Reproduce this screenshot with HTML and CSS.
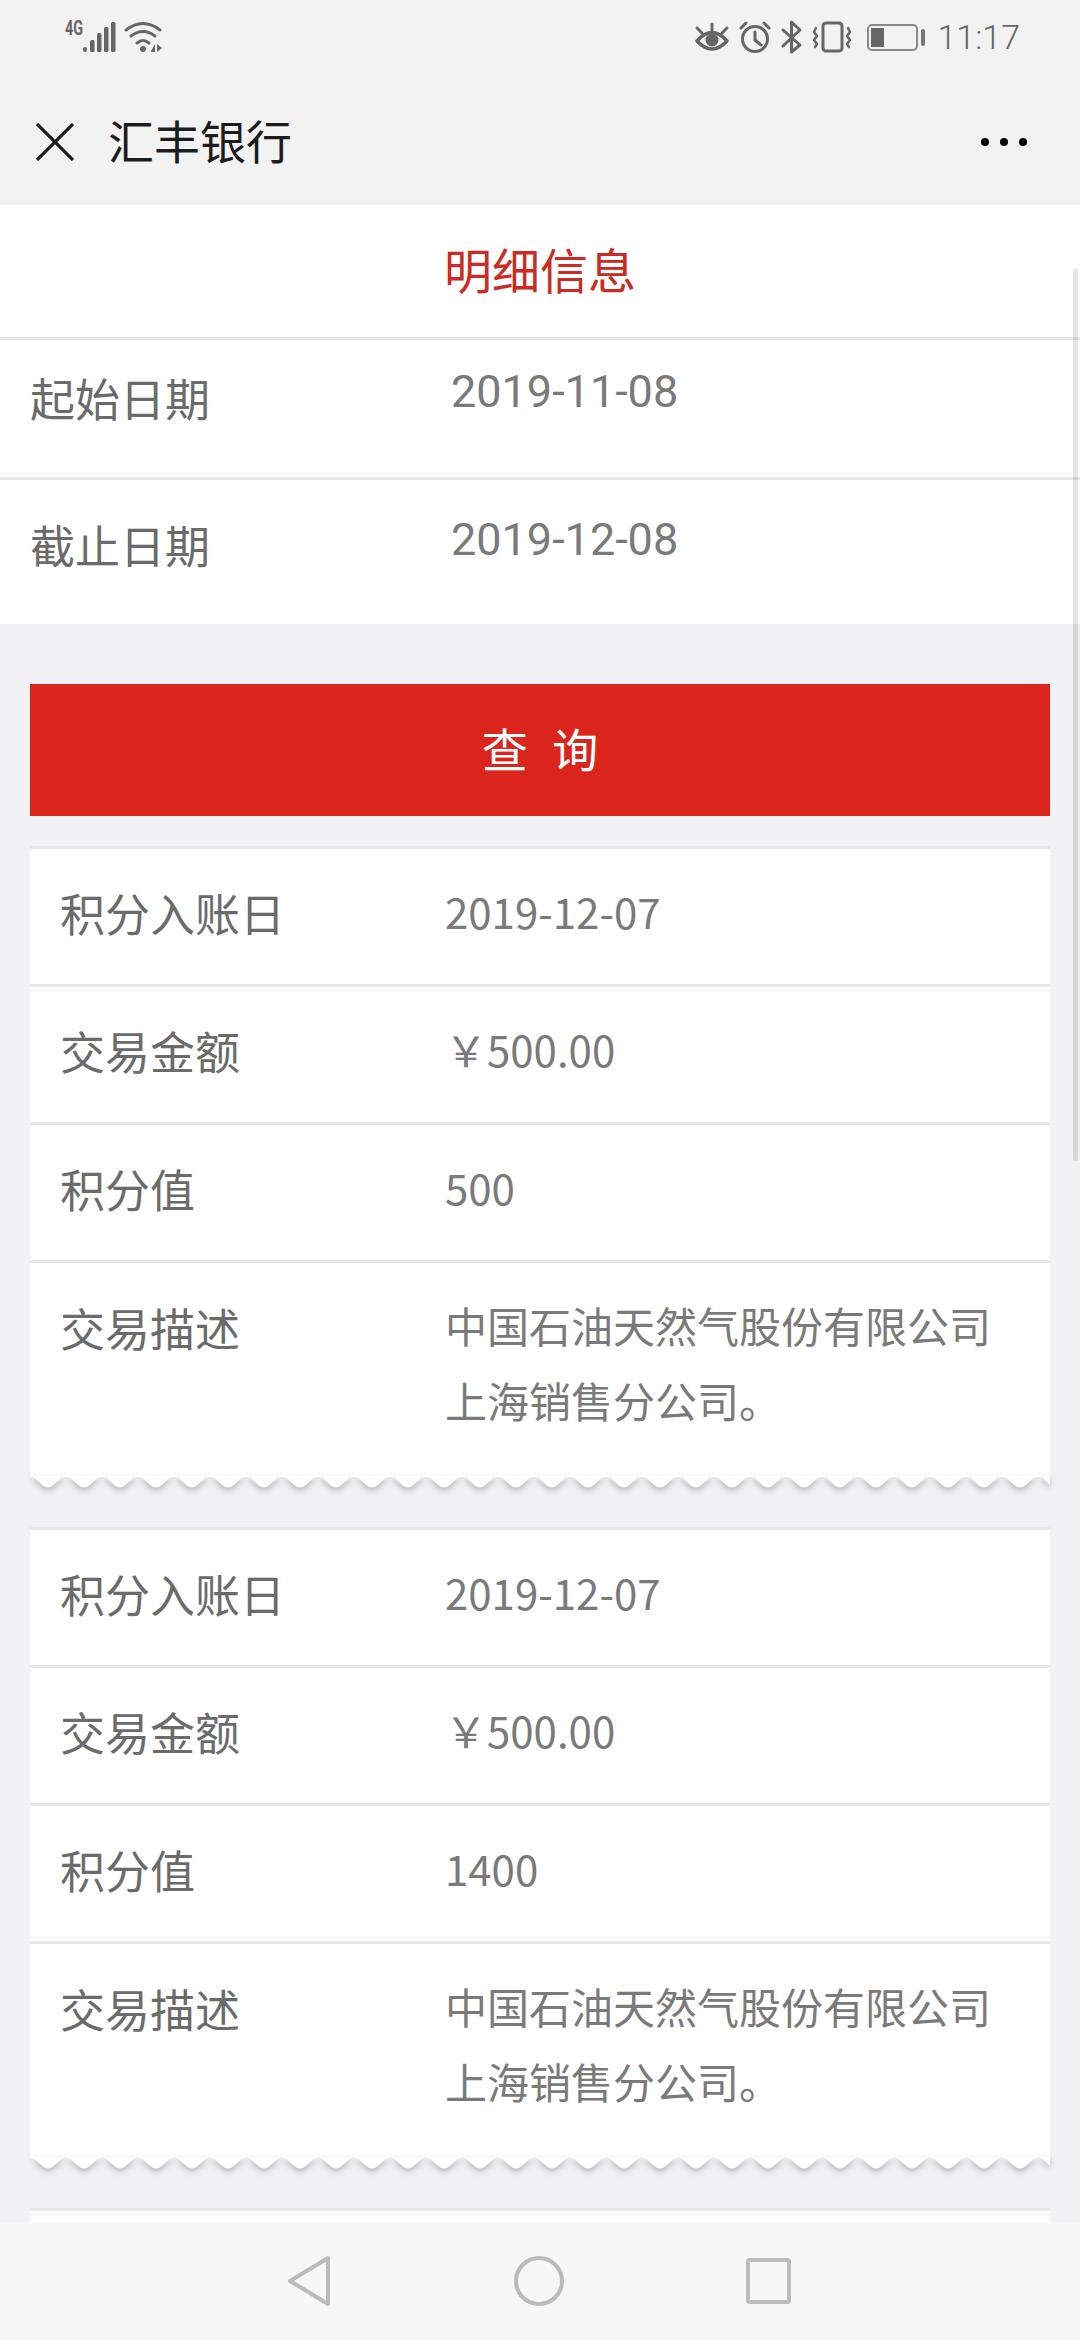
FILE: index.html
```html
<!DOCTYPE html>
<html>
<head>
    <title>汇丰银行</title>
    <link rel="stylesheet" href="styles.css">
</head>
<body>
    <div class="phone">
        <header class="top">
            <div class="status">
                <svg class="status-left" viewBox="40 10 126 46">
                    <text class="net" x="65" y="35" textLength="18" lengthAdjust="spacingAndGlyphs">4G</text>
                    <g fill="#666">
                        <rect x="83" y="47" width="4" height="5" rx="2"/>
                        <rect x="90" y="40" width="4.5" height="12" rx="1.5"/>
                        <rect x="97" y="33" width="4.5" height="19" rx="1.5"/>
                        <rect x="104" y="27" width="4.5" height="25" rx="1.5"/>
                        <rect x="111" y="22" width="4.5" height="30" rx="1.5"/>
                        <circle cx="143" cy="49" r="3"/>
                        <path d="M151 51l4-7v8h-4zM157 44l5 4-5 4z"/>
                    </g>
                    <g fill="none" stroke="#666" stroke-width="3" stroke-linecap="round">
                        <path d="M126 30Q143 17 160 30"/>
                        <path d="M131 36Q143 27 155 36"/>
                        <path d="M137 43Q143 38 149 43"/>
                    </g>
                </svg>
                <div class="status-right">
                    <svg class="status-icons" viewBox="694 18 234 38">
                        <g fill="none" stroke="#666" stroke-width="3" stroke-linecap="round" stroke-linejoin="round">
                            <path d="M698 41Q713 24 728 41Q713 57 698 41Z" stroke-width="3.500"/>
                            <path d="M713 24V30M698 28L703 33M728 28L723 33"/>
                            <circle cx="756" cy="39" r="12.5"/>
                            <path d="M756 32V40L762 45M742 28L747 23M770 28L765 23"/>
                            <path d="M784 30L801 45L792.500 52V22L801 30L784 46"/>
                            <rect x="824" y="23" width="19" height="28" rx="3"/>
                            <path d="M817 28L815 32L818 36L815 40L818 44L816 47" stroke-width="2.500"/>
                            <path d="M849 28L851 32L848 36L851 40L848 44L850 47" stroke-width="2.500"/>
                        </g>
                        <circle cx="713" cy="40" r="6.500" fill="#666"/>
                        <rect x="869" y="25" width="49" height="25" rx="4" fill="none" stroke="#8a8a8a" stroke-width="2"/>
                        <rect x="872" y="28" width="13" height="19" fill="#666"/>
                        <rect x="922" y="29" width="4" height="17" rx="2" fill="#777"/>
                    </svg>
                    <span class="time">11:17</span>
                </div>
            </div>
            <div class="navbar">
                <svg class="close" viewBox="0 0 38 38">
                    <path d="M1 1L37 37M37 1L1 37" fill="none" stroke="#1c1c1c" stroke-width="3.200"/>
                </svg>
                <span class="nav-title">汇丰银行</span>
                <svg class="more" viewBox="0 0 46 10">
                    <circle cx="4" cy="5" r="4"/>
                    <circle cx="23" cy="5" r="4"/>
                    <circle cx="42" cy="5" r="4"/>
                </svg>
            </div>
        </header>

        <main class="content">
            <div class="scrollbar"></div>
            <section class="filter">
                <h2 class="filter-title">明细信息</h2>
                <div class="filter-row">
                    <span class="filter-label">起始日期</span>
                    <span class="filter-value">2019-11-08</span>
                </div>
                <div class="filter-row">
                    <span class="filter-label">截止日期</span>
                    <span class="filter-value">2019-12-08</span>
                </div>
            </section>

            <button class="query" type="button">查 询</button>

            <div class="card">
                <div class="row"><span class="label">积分入账日</span><span class="value">2019-12-07</span></div>
                <div class="row"><span class="label">交易金额</span><span class="value">￥500.00</span></div>
                <div class="row"><span class="label">积分值</span><span class="value">500</span></div>
                <div class="row row-desc"><span class="label">交易描述</span><span class="value">中国石油天然气股份有限公司<br>上海销售分公司。</span></div>
            </div>
            <svg class="wave" width="1020" height="20">
                <defs>
                    <pattern id="wave" width="36" height="20" patternUnits="userSpaceOnUse">
                        <path d="M0 0V0.500C7 0.500 11 11.500 18 11.500C25 11.500 29 0.500 36 0.500V0Z" fill="#fff"/>
                    </pattern>
                </defs>
                <rect width="1020" height="20" fill="url(#wave)"/>
            </svg>

            <div class="card">
                <div class="row"><span class="label">积分入账日</span><span class="value">2019-12-07</span></div>
                <div class="row"><span class="label">交易金额</span><span class="value">￥500.00</span></div>
                <div class="row"><span class="label">积分值</span><span class="value">1400</span></div>
                <div class="row row-desc"><span class="label">交易描述</span><span class="value">中国石油天然气股份有限公司<br>上海销售分公司。</span></div>
            </div>
            <svg class="wave" width="1020" height="20">
                <rect width="1020" height="20" fill="url(#wave)"/>
            </svg>

            <div class="card">
                <div class="row"></div>
            </div>
        </main>

        <nav class="softkeys">
            <svg class="softkey" viewBox="286 2254 46 54">
                <path d="M328 2258V2304L290 2281Z" fill="none" stroke="#bbb" stroke-width="4" stroke-linejoin="round"/>
            </svg>
            <svg class="softkey" viewBox="513 2254 54 54">
                <circle cx="540" cy="2281" r="23" fill="none" stroke="#bbb" stroke-width="4"/>
            </svg>
            <svg class="softkey" viewBox="743 2254 52 54">
                <rect x="748" y="2260" width="41" height="42" rx="2" fill="none" stroke="#bbb" stroke-width="4"/>
            </svg>
        </nav>
    </div>
</body>
</html>
```

FILE: styles.css
```css
html, body { margin: 0; padding: 0; }
body { width: 1080px; height: 2340px; overflow: hidden; font-family: "Noto Sans CJK SC", Roboto, sans-serif; }
.phone { width: 1080px; height: 2340px; display: flex; flex-direction: column; background: #f1f1f4; }

.top { background: #f2f2f2; height: 205px; flex: none; }
.status { height: 72px; display: flex; justify-content: space-between; align-items: flex-start; padding: 10px 60px 0 40px; box-sizing: border-box; }
.status-left { width: 126px; height: 46px; }
.net { font-family: Roboto, sans-serif; font-size: 20px; font-weight: 700; fill: #666; }
.status-right { display: flex; align-items: center; margin-top: 8px; }
.status-icons { width: 234px; height: 38px; }
.time { margin-left: 10px; font-family: Roboto, sans-serif; font-weight: 300; font-size: 34px; line-height: 38px; color: #666; }

.navbar { height: 133px; display: flex; align-items: center; padding: 1px 53px 0 36px; box-sizing: border-box; }
.close { width: 38px; height: 38px; margin-top: 6px; }
.nav-title { margin-left: 34px; font-size: 46px; color: #1c1c1c; flex: 1; }
.more { width: 46px; height: 10px; margin-top: 6px; }

.content { position: relative; flex: 1; overflow: hidden; }
.scrollbar { position: absolute; top: 63px; right: 2px; width: 5px; height: 893px; border-radius: 3px; background: rgba(0, 0, 0, .1); }

.filter { background: #fff; }
.filter-title { margin: 0; height: 132px; border-bottom: 3px solid #e7e7eb; font-size: 48px; font-weight: 400; color: #cc2a22; line-height: 126px; text-align: center; }
.filter-row { height: 137px; display: flex; border-bottom: 3px solid #e7e7eb; padding: 0 0 0 30px; }
.filter-row:last-child { height: 144px; border-bottom: none; }
.filter-label { width: 421px; font-size: 45px; color: #6b6b6b; line-height: 115px; }
.filter-value { font-family: Roboto, sans-serif; font-size: 45px; color: #7a7a7a; line-height: 104px; }
.filter-row:last-child .filter-label { line-height: 129px; }
.filter-row:last-child .filter-value { line-height: 120px; }

.query { display: block; width: 1020px; height: 132px; margin: 60px 30px 30px; padding: 0 0 6px; border: none; background: #db251c; color: #fff; font-family: inherit; font-size: 46px; word-spacing: 14px; }

.card { width: 1020px; margin: 0 30px; background: #fff; border-top: 3px solid #e7e7eb; }
.row { height: 138px; box-sizing: border-box; display: flex; align-items: center; border-bottom: 3px solid #e7e7eb; padding: 0 0 9px 30px; }
.row-desc { height: 213px; align-items: flex-start; border-bottom: none; padding-top: 27px; padding-bottom: 0; }
.label { width: 385px; flex: none; font-size: 45px; color: #6b6b6b; line-height: 75px; }
.value { font-size: 42px; color: #7a7a7a; line-height: 75px; margin-bottom: 3px; }
.row-desc .value { margin-top: -3px; }

.wave { display: block; margin: 0 30px 31px; overflow: visible; filter: drop-shadow(0 3px 3px rgba(0, 0, 0, .25)); }

.softkeys { flex: none; height: 118px; background: #f7f7f7; display: flex; align-items: flex-start; padding: 32px 285px 0 286px; box-sizing: border-box; justify-content: space-between; }
.softkey { height: 54px; }
.softkey:nth-child(1) { width: 46px; }
.softkey:nth-child(2) { width: 54px; margin-left: 2px; }
.softkey:nth-child(3) { width: 52px; }
```
